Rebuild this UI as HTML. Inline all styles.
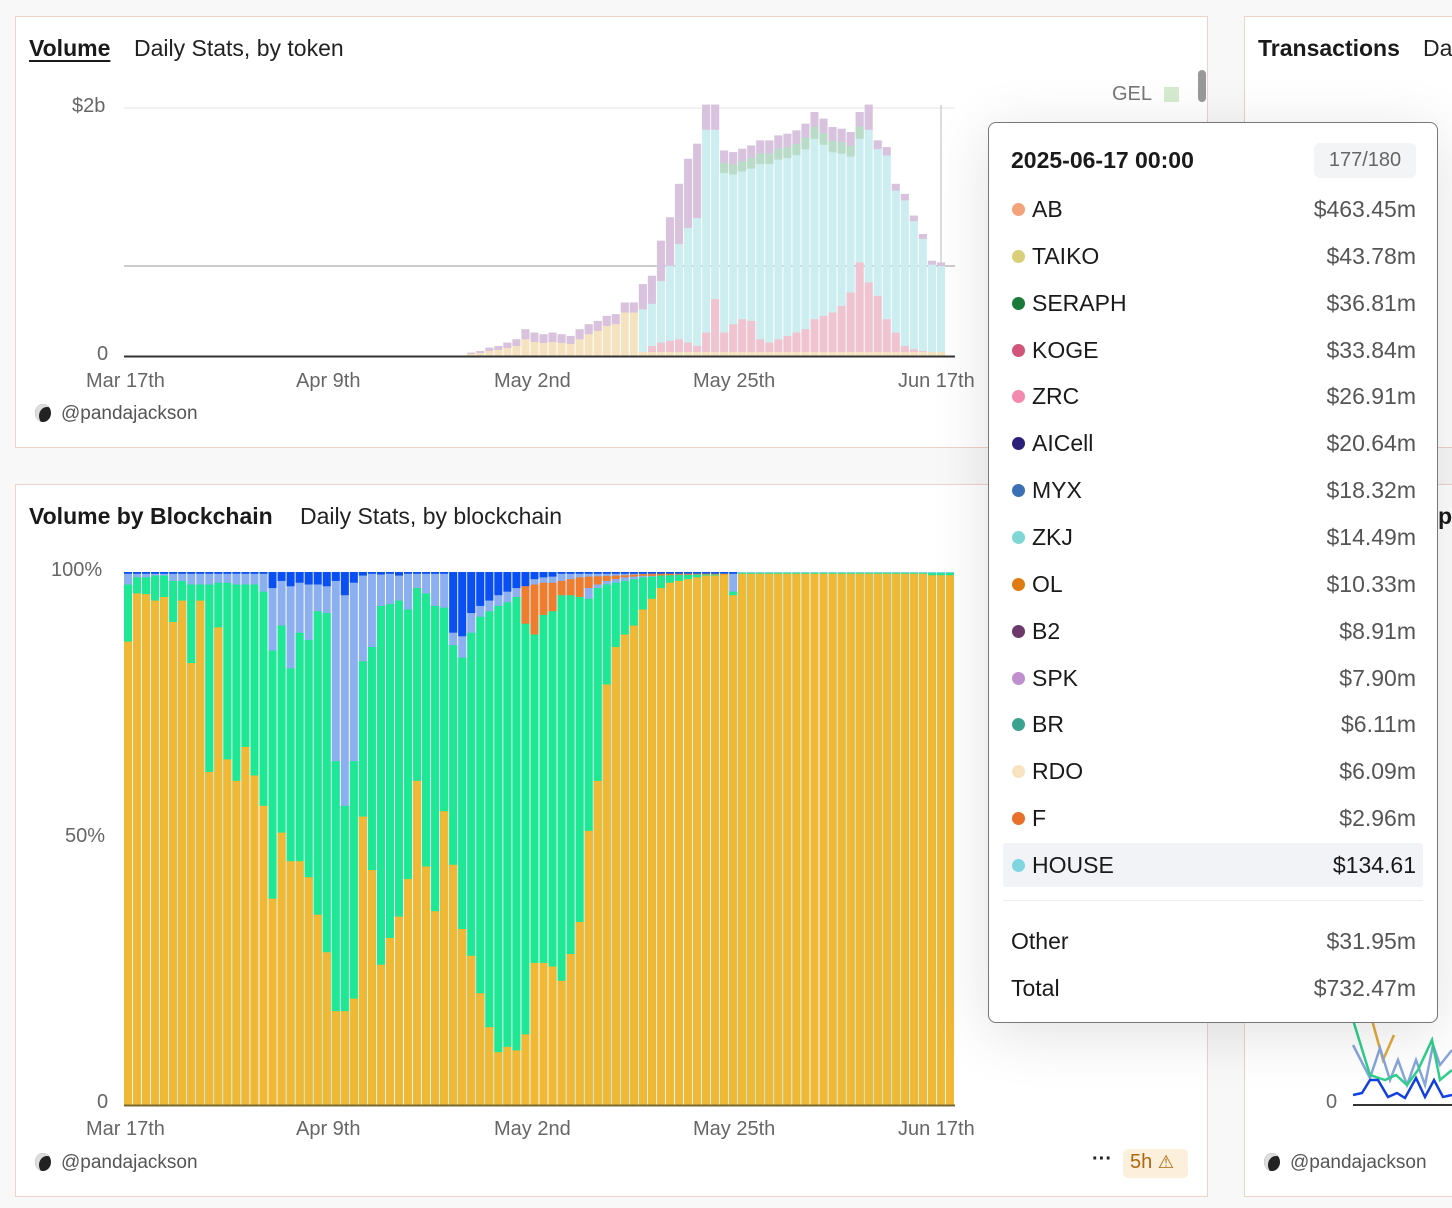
<!DOCTYPE html>
<html><head><meta charset="utf-8">
<style>
*{box-sizing:border-box;margin:0;padding:0}
body{width:1452px;height:1208px;background:#f8f8f8;font-family:"Liberation Sans",sans-serif;position:relative;overflow:hidden;color:#1a1a1a}
.card{position:absolute;background:#fff;border:1px solid #efd2c8}
.t{position:absolute;white-space:nowrap}
.ax{position:absolute;font-size:20px;color:#666;white-space:nowrap}
.tip{position:absolute;left:988px;top:122px;width:450px;height:901px;background:#fff;border:1px solid #777;border-radius:8px;box-shadow:0 10px 60px rgba(0,0,0,0.12)}
.row{position:absolute;left:0;width:450px;height:40px;font-size:23px}
.row .d{position:absolute;left:23px;top:14px;width:13px;height:13px;border-radius:50%}
.row .n{position:absolute;left:43px;top:7px;color:#1a1a1a}
.row .v{position:absolute;right:23px;top:7px;color:#555}
.foot{position:absolute;font-size:19px;color:#555;white-space:nowrap}
.panda{display:inline-block;width:16px;height:18px;background:#222;border-radius:50%;vertical-align:-3px;margin-right:10px;box-shadow:inset 4px 3px 0 #ddd}
</style></head><body>

<div class="card" style="left:15px;top:16px;width:1193px;height:432px"></div>
<div class="card" style="left:15px;top:484px;width:1193px;height:713px"></div>
<div class="card" style="left:1244px;top:16px;width:220px;height:432px"></div>
<div class="card" style="left:1244px;top:484px;width:220px;height:713px"></div>

<div class="t" style="left:29px;top:35px;font-size:23px;font-weight:bold;text-decoration:underline;text-underline-offset:4px">Volume</div>
<div class="t" style="left:134px;top:35px;font-size:23px;color:#222">Daily Stats, by token</div>
<div class="t" style="left:29px;top:503px;font-size:23px;font-weight:bold">Volume by Blockchain</div>
<div class="t" style="left:300px;top:503px;font-size:23px;color:#222">Daily Stats, by blockchain</div>
<div class="t" style="left:1258px;top:35px;font-size:23px;font-weight:bold">Transactions</div>
<div class="t" style="left:1423px;top:35px;font-size:23px;color:#222">Da</div>
<div class="t" style="left:1438px;top:503px;font-size:23px;font-weight:bold">p</div>

<div class="ax" style="left:72px;top:95px">$2b</div>
<div class="ax" style="left:97px;top:343px">0</div>
<div class="ax" style="left:1112px;top:83px;color:#777">GEL</div>
<div style="position:absolute;left:1164px;top:87px;width:15px;height:15px;background:#d6ebd0"></div>
<div style="position:absolute;left:1198px;top:70px;width:8px;height:32px;background:#999;border-radius:4px"></div>

<div class="ax" style="left:51px;top:559px">100%</div>
<div class="ax" style="left:65px;top:825px">50%</div>
<div class="ax" style="left:97px;top:1091px">0</div>
<div class="ax" style="left:1326px;top:1091px">0</div>

<div class="ax" style="left:86px;top:370px">Mar 17th</div>
<div class="ax" style="left:296px;top:370px">Apr 9th</div>
<div class="ax" style="left:494px;top:370px">May 2nd</div>
<div class="ax" style="left:693px;top:370px">May 25th</div>
<div class="ax" style="left:898px;top:370px">Jun 17th</div>
<div class="ax" style="left:86px;top:1118px">Mar 17th</div>
<div class="ax" style="left:296px;top:1118px">Apr 9th</div>
<div class="ax" style="left:494px;top:1118px">May 2nd</div>
<div class="ax" style="left:693px;top:1118px">May 25th</div>
<div class="ax" style="left:898px;top:1118px">Jun 17th</div>

<div class="foot" style="left:35px;top:403px"><span class="panda"></span>@pandajackson</div>
<div class="foot" style="left:35px;top:1152px"><span class="panda"></span>@pandajackson</div>
<div class="foot" style="left:1264px;top:1152px"><span class="panda"></span>@pandajackson</div>
<div class="t" style="left:1092px;top:1148px;font-size:20px;color:#222;font-weight:bold">···</div>
<div class="t" style="left:1123px;top:1149px;width:65px;height:29px;background:#fcefdc;border-radius:5px;color:#b0660a;font-size:20px;padding:2px 7px">5h <span style="font-size:18px">⚠</span></div>

<svg id="top" style="position:absolute;left:0;top:0" width="1452" height="1208"></svg>

<div class="tip">
<div class="t" style="left:22px;top:24px;font-size:23px;font-weight:bold">2025-06-17 00:00</div>
<div class="t" style="left:325px;top:20px;width:102px;height:35px;background:#f3f4f6;border-radius:6px;font-size:20px;color:#666;text-align:center;padding-top:6px">177/180</div>
<div style="position:absolute;left:14px;top:720px;width:420px;height:44px;background:#f1f3f6;border-radius:3px"></div>
<div style="position:absolute;left:14px;top:777px;width:420px;height:1px;background:#eee"></div>
<div id="rows"></div>
<div class="row" style="top:798px"><span class="n" style="left:22px">Other</span><span class="v">$31.95m</span></div>
<div class="row" style="top:845px"><span class="n" style="left:22px">Total</span><span class="v">$732.47m</span></div>
</div>

<script>
var NS="http://www.w3.org/2000/svg",svg=document.getElementById('top');
function r(x,y,w,h,c){if(h<=0)return;var e=document.createElementNS(NS,'rect');e.setAttribute('x',x);e.setAttribute('y',y);e.setAttribute('width',w);e.setAttribute('height',h);e.setAttribute('fill',c);svg.appendChild(e);}
function ln(x1,y1,x2,y2,c,w){var e=document.createElementNS(NS,'line');e.setAttribute('x1',x1);e.setAttribute('y1',y1);e.setAttribute('x2',x2);e.setAttribute('y2',y2);e.setAttribute('stroke',c);e.setAttribute('stroke-width',w);svg.appendChild(e);}
var T=572,B=1105,H=B-T,L=124,W=831,N=92,bw=W/N;
var Y=[230,95,97,115,105,175,115,290,115,595,190,560,620,525,605,690,950,765,845,845,890,995,1100,1265,1265,1230,720,870,1135,1060,1000,895,620,860,985,705,855,1035,1110,1215,1310,1380,1365,1375,1330,1130,1130,1140,1180,1105,1015,760,620,350,245,210,185,140,110,80,65,60,55,50,45,45,42,100];
var G=[70,50,50,45,45,60,60,70,70,70,65,65,70,70,70,90,255,185,305,205,225,145,150,565,690,565,285,245,130,125,115,140,80,95,130,135,240,275,205,160,145,130,120,105,100,100,95,95,100,100,105,110,80,70,65,60,55,50,48,45,44,43,42,42,41,41,40,90];
var LB={16:80,17:60,18:75,19:65,20:70,21:70,22:75,23:60,24:100,25:65,26:45,28:42,30:45,36:205,37:215,38:150,39:130,40:115,41:100,42:90,43:80,44:75,45:55,46:50,47:48};
var OR={44:[75,180],45:[70,210],46:[65,155],47:[65,145],48:[60,100],49:[55,100],50:[50,105],51:[48,80],52:[47,70],53:[46,60],54:[45,55],55:[44,50],56:[42,48],57:[41,46],58:[40,46],59:[40,45],60:[40,44],61:[40,43],62:[40,43],63:[40,42],64:[40,42],65:[40,42],66:[40,90]};
function f(z){return T+(z-35)/1493*H;}
for(var i=0;i<N;i++){var x=L+i*bw,w=bw-1;
 var y=i<Y.length?Y[i]:(i>88?44:40), g=i<G.length?G[i]:38;
 r(x,T,w,H,'#8caff0');
 var lb=LB[i]||40; r(x,T,w,f(lb)-T,'#0a4ff2');
 if(i>=68) r(x,T,w,H,'#7fd6d6');
 r(x,f(g),w,B-f(g),'#1ee894');
 if(OR[i]){r(x,f(OR[i][0]),w,f(OR[i][1])-f(OR[i][0]),'#ef7d30');}
 r(x,f(y),w,B-f(y),'#f0b834');
}
ln(124,1105.5,955,1105.5,'#7a6a30',2);
ln(124,108,955,108,'#e5e5e5',1);ln(124,266,955,266,'#bbb',1.5);ln(941,105,941,356,'#bbb',1);
var TY=[1060,1055,1045,1040,1030,1020,990,1000,1005,1000,1005,1010,990,975,965,950,945,910,910,855,830,725,655,555,480,435,318,318,455,460,450,440,425,425,410,405,395,375,340,360,385,390,400,340,318,425,445,555,585,650,705,785,790];
var PK=[0,0,0,0,0,0,0,0,0,0,0,0,0,0,0,0,0,0,0,0,1040,1030,1025,1020,1030,1040,1000,900,1000,975,960,965,1020,1030,1020,1010,1000,990,960,950,940,920,880,790,850,890,960,1000,1040,1050,1055,1060,1065];
function g2(z){return 356-(1070-z)/742*248;}
for(var j=0;j<TY.length;j++){var i=38+j,x=L+i*bw,w=bw-1,ty=g2(TY[j]);
 var h=356-ty;
 if(j<19){r(x,ty,w,h,'#f5e3c0');r(x,ty,w,Math.min(h*0.4,10),'#d8c2dd');}
 else{r(x,ty,w,h,'#cdeef0');
  var cap=j<26?h*0.35:(j<45?Math.max(8,h*0.1):h*0.04);
  r(x,ty,w,cap,'#d8c2dd');
  if(j>=28&&j<44)r(x,ty+cap*0.6,w,cap*0.5,'#b9dcc8');
  if(PK[j]){var py=g2(PK[j]);r(x,py,w,356-py,'#f0c3d0');}
  r(x,352,w,4,'#f5e3c0');
 }
}
ln(124,356.5,955,356.5,'#333',2);
function pl(pts,c){var e=document.createElementNS(NS,'polyline');e.setAttribute('points',pts);e.setAttribute('fill','none');e.setAttribute('stroke',c);e.setAttribute('stroke-width',2.5);svg.appendChild(e);}
pl('1353,1023 1357,1010 1372,1020 1383,1060 1394,1035','#e0a93a');
pl('1353,1045 1370,1078 1380,1048 1390,1080 1398,1060 1407,1085 1416,1060 1425,1085 1433,1045 1440,1065 1452,1050','#86a6dc');
pl('1353,1020 1370,1075 1385,1080 1396,1075 1407,1085 1418,1070 1432,1040 1440,1080 1452,1070','#2ecf8a');
pl('1353,1095 1362,1093 1370,1080 1378,1080 1388,1097 1397,1093 1405,1098 1416,1078 1425,1097 1434,1080 1443,1097 1452,1095','#1040e0');
ln(1353,1105,1452,1105,'#333',2);
var rows=[['AB','#f4a27a','$463.45m'],['TAIKO','#d9cf7a','$43.78m'],['SERAPH','#1a7a3a','$36.81m'],['KOGE','#d1557a','$33.84m'],['ZRC','#f28ab0','$26.91m'],['AICell','#2b1f7a','$20.64m'],['MYX','#3d6fb5','$18.32m'],['ZKJ','#7fd6d6','$14.49m'],['OL','#e07b12','$10.33m'],['B2','#6b3a6b','$8.91m'],['SPK','#c08fd0','$7.90m'],['BR','#3aa38f','$6.11m'],['RDO','#f7e3c0','$6.09m'],['F','#e8702a','$2.96m'],['HOUSE','#7fd6e0','$134.61']];
var h='';rows.forEach(function(o,k){h+='<div class="row" style="top:'+(66+k*46.85)+'px"><span class="d" style="background:'+o[1]+'"></span><span class="n">'+o[0]+'</span><span class="v"'+(k==14?' style="color:#1a1a1a"':'')+'>'+o[2]+'</span></div>';});
document.getElementById('rows').innerHTML=h;
</script>
</body></html>
